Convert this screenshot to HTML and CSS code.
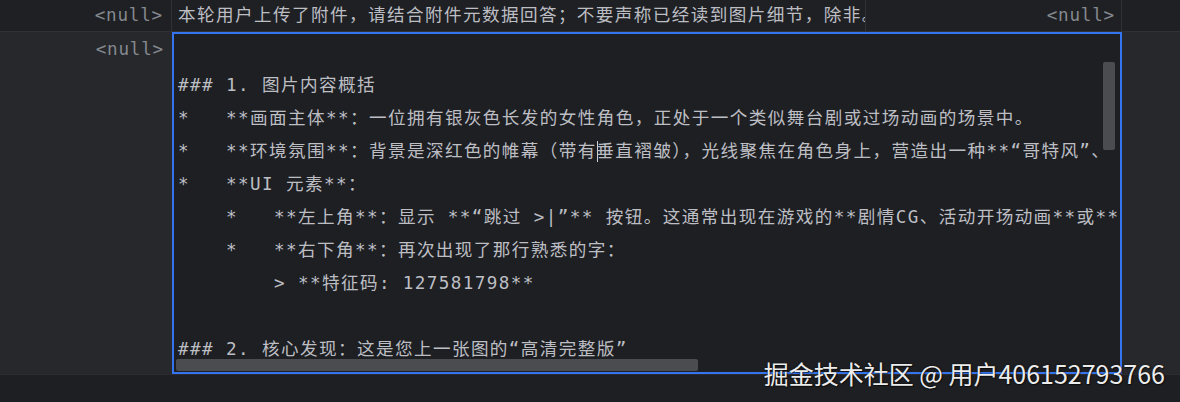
FILE: index.html
```html
<!DOCTYPE html>
<html lang="zh">
<head>
<meta charset="utf-8">
<title>Cell editor</title>
<link rel="stylesheet" href="styles.css">
</head>
<body>
<div class="table">
  <div class="row row-top">
    <div class="gutter"><span class="null">&lt;null&gt;</span></div>
    <div class="cell cell-text">本轮用户上传了附件，请结合附件元数据回答；不要声称已经读到图片细节，除非。</div>
    <div class="cell cell-null"><span class="null">&lt;null&gt;</span></div>
    <div class="rest"></div>
  </div>
  <div class="row row-edit">
    <div class="gutter gutter-edit"><span class="null">&lt;null&gt;</span></div>
    <div class="editor">
      <div class="lines"><div class="line"> </div><div class="line">### 1. 图片内容概括</div><div class="line">*   **画面主体**：一位拥有银灰色长发的女性角色，正处于一个类似舞台剧或过场动画的场景中。</div><div class="line">*   **环境氛围**：背景是深红色的帷幕（带有<span class="caret"></span>垂直褶皱），光线聚焦在角色身上，营造出一种**“哥特风”、</div><div class="line">*   **UI 元素**：</div><div class="line">    *   **左上角**：显示 **“跳过 &gt;|”** 按钮。这通常出现在游戏的**剧情CG、活动开场动画**或**</div><div class="line">    *   **右下角**：再次出现了那行熟悉的字：</div><div class="line">        &gt; **特征码: 127581798**</div><div class="line"> </div><div class="line">### 2. 核心发现：这是您上一张图的“高清完整版”</div></div>
      <div class="vscroll"></div>
      <div class="hscroll"></div>
    </div>
    <div class="rest rest-edit"></div>
  </div>
  <div class="bottom"></div>
</div>
<div class="watermark">掘金技术社区 @ 用户406152793766</div>
</body>
</html>
```
FILE: styles.css
```css
html, body {
  margin: 0;
  padding: 0;
}
body {
  width: 1180px;
  height: 402px;
  overflow: hidden;
  background: #1e1f22;
  font-family: "DejaVu Sans Mono", "Noto Sans CJK SC", monospace;
  color: #bcbec4;
  position: relative;
}
.table {
  display: flex;
  flex-direction: column;
  height: 402px;
}
.row {
  display: flex;
}
.row-top {
  height: 31px;
  border-bottom: 1px solid #2f3135;
  background: #1f2023;
}
.gutter {
  border-right: 1px solid #2f3135;
  display: flex;
  justify-content: flex-end;
  padding-right: 8px;
  box-sizing: border-box;
  width: 172px;
}
.null {
  color: #858990;
  font-size: 17.6px;
  letter-spacing: 0.8px;
  line-height: 31px;
}
.cell {
  box-sizing: border-box;
  border-right: 1px solid #2f3135;
  overflow: hidden;
  white-space: nowrap;
}
.cell-text {
  width: 694px;
  padding-left: 6px;
  font-size: 17.6px;
  letter-spacing: 1.4px;
  line-height: 31px;
}
.cell-null {
  width: 256px;
  display: flex;
  justify-content: flex-end;
  padding-right: 6px;
}
.rest {
  flex: 1;
}
.row-edit {
  height: 342px;
  background: #26282b;
  border-bottom: 1px solid #2a2c30;
}
.gutter-edit {
  border-right: none;
  align-items: flex-start;
  padding-top: 2px;
}
.gutter-edit .null {
  line-height: 31px;
}
.editor {
  position: relative;
  width: 950px;
  height: 342px;
  box-sizing: border-box;
  border: 2px solid #3574f0;
  background: #1e1f22;
  overflow: hidden;
}
.lines {
  padding: 1.5px 0 0 4px;
  font-size: 17.6px;
  letter-spacing: 1.4px;
  line-height: 33px;
  white-space: pre;
}
.line {
  height: 33px;
}
.caret {
  display: inline-block;
  width: 0;
  height: 21px;
  border-left: 1.5px solid #ced0d6;
  vertical-align: -5px;
  margin-right: -1.5px;
}
.vscroll {
  position: absolute;
  left: 929px;
  top: 28px;
  width: 12px;
  height: 88px;
  background: #4b4c4f;
  border-radius: 2px;
}
.hscroll {
  position: absolute;
  left: 2px;
  top: 325px;
  width: 522px;
  height: 12px;
  background: #4b4c4f;
  border-radius: 2px;
}
.rest-edit {
  background: #26282b;
}
.bottom {
  flex: 1;
  background: #1e1f22;
}
.watermark {
  position: absolute;
  right: 15px;
  top: 357px;
  font-family: "Noto Sans CJK SC", "Noto Sans", sans-serif;
  font-size: 25px;
  line-height: 32px;
  color: #ececec;
  text-shadow: 0 0 2px rgba(0, 0, 0, 0.7), 1px 1px 1px rgba(0, 0, 0, 0.5);
  white-space: nowrap;
}
```
